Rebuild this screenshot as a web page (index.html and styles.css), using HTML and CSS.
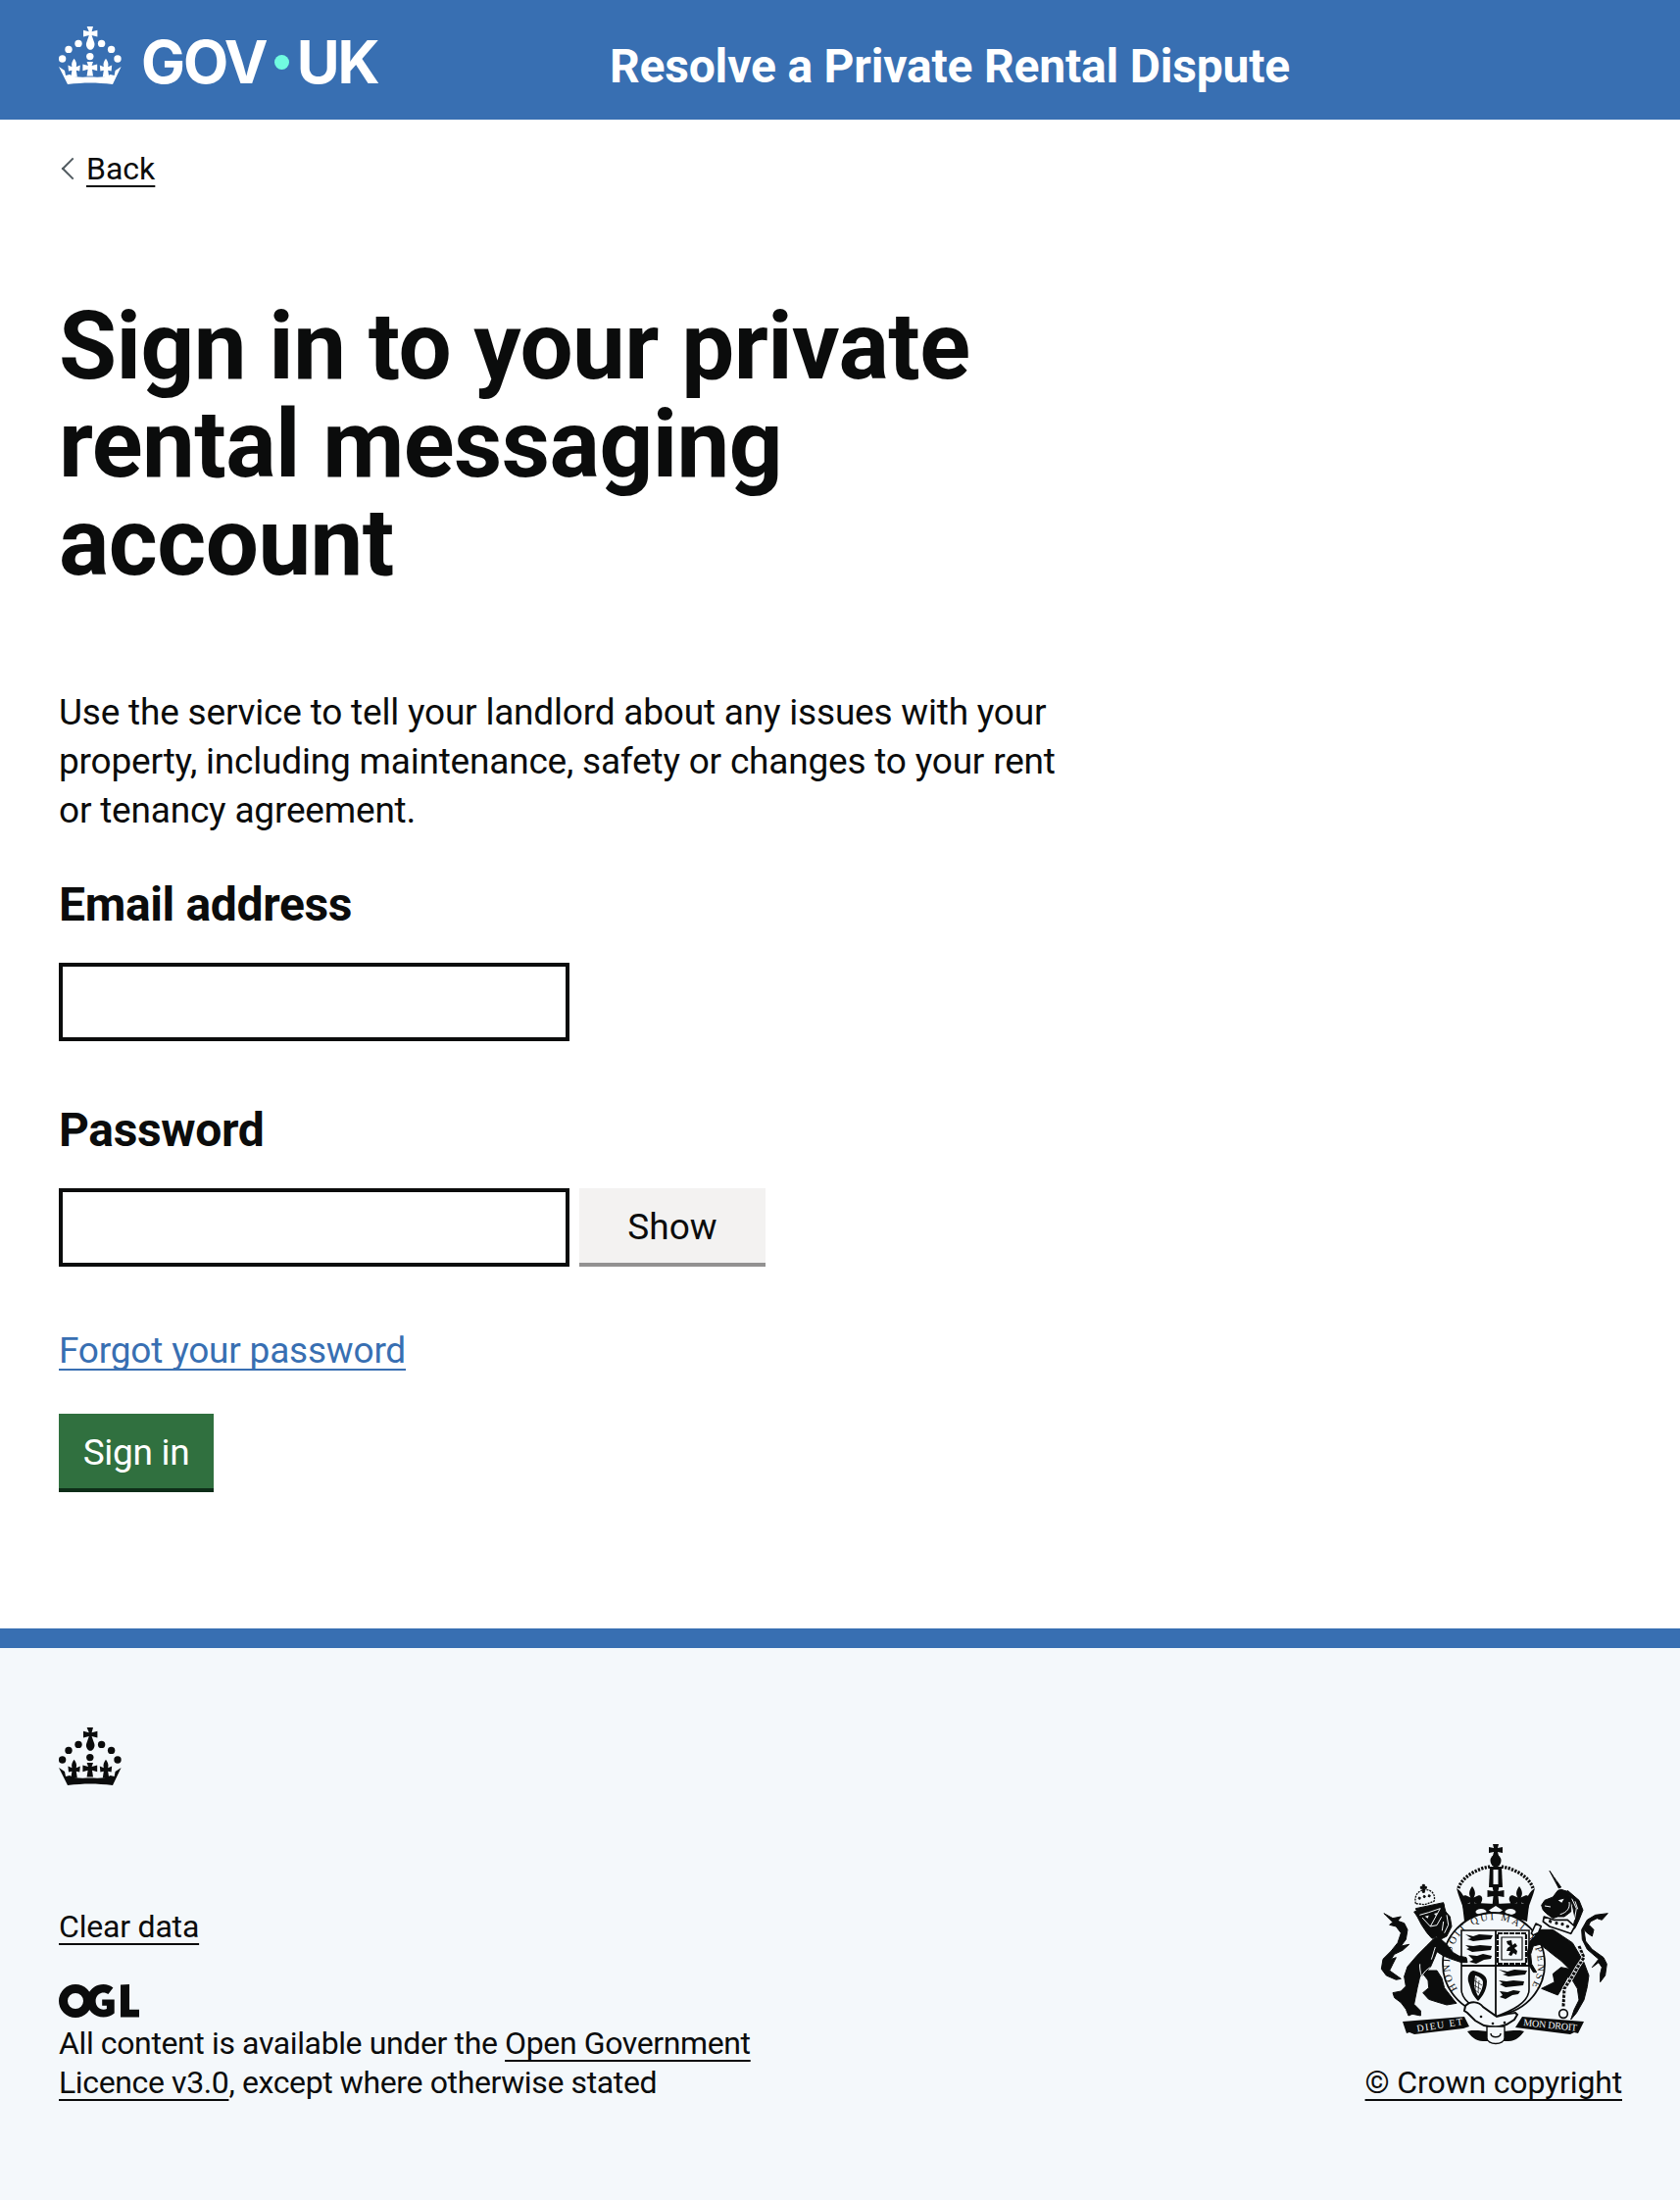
FILE: index.html
```html
<!DOCTYPE html>
<html lang="en">
<head>
<meta charset="utf-8">
<title>Sign in - Resolve a Private Rental Dispute</title>
<link rel="stylesheet" href="styles.css">
</head>
<body>
<svg class="defs" width="0" height="0" aria-hidden="true">
  <symbol id="crown" viewBox="0 0 32 30">
    <circle cx="1.8" cy="16.500" r="1.850"/><circle cx="5" cy="11.700" r="1.850"/><circle cx="10" cy="8.700" r="1.850"/><circle cx="15.900" cy="15.300" r="1.850"/><circle cx="21.800" cy="8.700" r="1.850"/><circle cx="26.800" cy="11.700" r="1.850"/><circle cx="30" cy="16.500" r="1.850"/>
    <path d="M14.300 0h3.200l-.7 2.600 2.900-.7v3.400l-2.900-.8 1.300 3.700c.6 1.700-.7 3.700-2 3.700s-2.600-2-2-3.700l1.300-3.700-2.900.8V1.900l2.900.7z"/>
    <path d="M14.300 18h3.200l-.7 2 2.800-.8v3.400l-2.600-.7.5 3.400h-3.200l.5-3.400-2.600.7v-3.400l2.800.8z"/>
    <path d="M7.800 16.400c1 1.500 1.500 2.500 1.100 4.200l2-.8-.3 3-1.700-.4.500 3.300H6.200l.5-3.300-1.700.4-.3-3 2 .8c-.4-1.700.1-2.700 1.100-4.200z"/>
    <path d="M24 16.400c-1 1.500-1.500 2.500-1.100 4.200l-2-.8.3 3 1.700-.4-.5 3.300h3.200l-.5-3.300 1.700.4.300-3-2 .8c.4-1.700-.1-2.700-1.100-4.200z"/>
    <path d="M0 20.500l3 2 .5 2.500 2-.5c2.500 1.700 6.500 1.300 10.400 1.300s7.900.4 10.400-1.300l2 .5.500-2.500 3-2-4.300 9c-8.500-1-14.500-1-23 0z"/>
  </symbol>
  <symbol id="fleur" viewBox="-12 -22 24 24" overflow="visible">
    <path d="M0-21c3 4 4 8 1.500 11.500l4.500-2c3-1 5 2 4 5l-2 5-6-3 1 5H-3l1-5-6 3-2-5c-1-3 1-6 4-5l4.500 2C-4-13-3-17 0-21z"/>
  </symbol>
</svg>

<header class="site-header">
  <a class="logo" href="#">
    <svg class="crown" aria-hidden="true"><use href="#crown"/></svg>
    <span class="logo-text">GOV<span class="logo-dot"></span>UK</span>
  </a>
  <a class="service-name" href="#">Resolve a Private Rental Dispute</a>
</header>

<div class="page">
  <a class="back-link" href="#">Back</a>
  <main class="main">
    <h1 class="title">Sign in to your private rental messaging account</h1>
    <p class="intro">Use the service to tell your landlord about any issues with your property, including maintenance, safety or changes to your rent or tenancy agreement.</p>
    <form class="form">
      <div class="field">
        <label class="label" for="email">Email address</label>
        <input class="input" id="email" type="email">
      </div>
      <div class="field">
        <label class="label" for="password">Password</label>
        <div class="password-row">
          <input class="input" id="password" type="password">
          <button class="btn btn-secondary" type="button">Show</button>
        </div>
      </div>
      <a class="forgot" href="#">Forgot your password</a>
      <button class="btn btn-primary" type="submit">Sign in</button>
    </form>
  </main>
</div>

<footer class="footer">
  <svg class="crown crown-footer" aria-hidden="true"><use href="#crown"/></svg>
  <div class="footer-row">
    <div class="footer-meta">
      <a class="footer-link clear" href="#">Clear data</a>
      <svg class="ogl" viewBox="0 0 82 34" aria-hidden="true">
        <path fill-rule="evenodd" d="M17 0a17 17 0 1 1 0 34 17 17 0 0 1 0-34zm0 9a8 8 0 1 0 0 16 8 8 0 0 0 0-16z"/>
        <path d="M45.500 0c3.900 0 7.300 1.300 9.900 3.500l-5 6.600c-1.400-1.100-3-1.700-4.800-1.700-4.700 0-8 3.800-8 8.600 0 4.900 3.300 8.700 8.100 8.700 1.300 0 2.300-.2 3.200-.7v-3.300h-4.700v-6.200h12.500v14c-3 2.700-7.200 4-11.100 4-9.500 0-17-7.200-17-16.500C28.600 7.200 36.100 0 45.500 0z"/>
        <path d="M63 .6L72 0v25.700h10V33.600H63z"/>
      </svg>
      <p class="licence">All content is available under the <a class="footer-link" href="#">Open Government Licence v3.0</a>, except where otherwise stated</p>
    </div>
    <div class="footer-crest">
      <svg class="arms" viewBox="0 0 250 215" aria-hidden="true">
        <g transform="translate(-40 -15)">
          <!-- royal crown -->
          <path d="M162 21h6l-1 4 5-1v6l-5-1 1 4h-6l1-4-5 1v-6l5 1z"/>
          <ellipse cx="165" cy="38" rx="5.500" ry="6.500"/>
          <path d="M127 66C131 54 146 46 159 44M203 66C199 54 184 46 171 44" fill="none" stroke="#0b0c0c" stroke-width="3.400" stroke-dasharray="2.200 1.300"/>
          <path d="M159 44h12l1 21h-14z"/><path d="M162.500 47h5v15h-5z" fill="#f4f8fb"/>
          <path d="M161.500 64h7l-1 5 6-1v7l-6-1 1 10h-7l1-10-6 1v-7l6 1z"/>
          <use href="#fleur" x="129" y="63" width="24" height="24"/>
          <use href="#fleur" x="177" y="63" width="24" height="24"/>
          <path d="M125 66c5 3 9 9 11 20l-4 1c-2-7-5-13-7-21zM205 66c-5 3-9 9-11 20l4 1c2-7 5-13 7-21z"/>
          <path d="M131 83c10-3 22-1 34-1s24-2 34 1l-2 17c-12-4-21-6-32-6s-20 2-32 6z"/>
          <ellipse cx="150" cy="90" rx="5.500" ry="3" fill="#f4f8fb"/><path d="M165 84l7 4.500-7 4.500-7-4.500z" fill="#f4f8fb"/><ellipse cx="180" cy="90" rx="5.500" ry="3" fill="#f4f8fb"/>
          <!-- garter and shield -->
          <circle cx="163" cy="143" r="52" fill="#f4f8fb" stroke="#0b0c0c" stroke-width="1.800"/>
          <path id="garter-arc" d="M126 168.800A45 45 0 1 1 200 168.800" fill="none"/>
          <text class="garter"><textPath href="#garter-arc" textLength="192" lengthAdjust="spacing">HONI SOIT QUI MAL Y PENSE</textPath></text>
          <path d="M130 109h69v60c0 14-18 22-34 28-16-6-35-14-35-28z" fill="#f4f8fb" stroke="#0b0c0c" stroke-width="1.600"/>
          <path d="M165 109v88M130 145h69" stroke="#0b0c0c" stroke-width="1.800"/>
          <path d="M134 113l8 2 6-2 14 1-2 4-10 1-8 1-6-2 4-1zM134 124l8 1 7-1 12 1-1 4-9 1-10 1-6-3 3-1zM137 134l9 1 6-2 9 2-1 3-7 1-8 4-7-2 4-2z"/>
          <path d="M167 112h29v31h-29z" fill="none" stroke="#0b0c0c" stroke-width="2.200" stroke-dasharray="5 1"/><path d="M171 116h21v23h-21z" fill="none" stroke="#0b0c0c" stroke-width="1.200"/>
          <path d="M176 120l5-1 1 5 3-2 2 3-3 2 3 3-1 4-3-2-2 3-3-1 2-4-4 0 1-3 3-2-3-2z"/>
          <path d="M142 150c-4 1-6 6-5 11l3 9c1 4 4 8 7 11 4-4 9-11 9-20 0-6-6-9-14-11z"/>
          <path d="M144 155c4 1 8 4 8 7 0 6-3 11-5 14-2-4-4-8-4-12z" fill="#f4f8fb"/>
          <path d="M145 157l-1 14M148 160l-1 12M143 160l8 5M143 165l7 4M144 170l4 3" stroke="#0b0c0c" stroke-width=".7"/>
          <path d="M168 149l9 2 7-2 13 1-2 4-9 1-8 1-6-2 4-1zM168 160l8 1 7-1 11 1-1 4-9 1-9 1-6-3 3-1zM169 171l8 1 6-2 7 1-2 3-6 1-7 4-6-2 3-2z"/>
          <!-- motto ribbons -->
          <path d="M70 202l63-5 5 10-6 2-50 6-5-2-3 1z"/>
          <text class="motto" transform="translate(85 212.500) rotate(-9)" textLength="47">DIEU ET</text>
          <path d="M255 202l-63-5-7 11 8 1 48 6 4-2 4 1z"/>
          <text class="motto" transform="translate(193 206) rotate(6)" textLength="55">MON DROIT</text>
          <path d="M134 186c6-6 14-4 18 1l14 10 12-3 7-1 2 2-3 5-8 5-11 3-12-2-9-5-8-8-3-2z" fill="#f4f8fb" stroke="#0b0c0c" stroke-width="2"/>
          <circle cx="150" cy="197" r="1.300"/><circle cx="162" cy="204" r="1.300"/><circle cx="174" cy="203" r="1.300"/>
          <path d="M136 212c3 4 8 10 16 10l6 0-1-10-10-1-7 0zM194 212c-3 4-8 10-16 10l-6 0 1-10 10-1 7 0z"/>
          <path d="M156 207h18v12c0 3-4 5.500-9 5.500s-9-2.500-9-5.500z" fill="#f4f8fb" stroke="#0b0c0c" stroke-width="1.400"/>
          <path d="M160 214c0 5 10 5 10 0" fill="none" stroke="#0b0c0c" stroke-width="1.400"/>
        </g>
        <!-- lion -->
        <g class="beast" transform="translate(0 25) scale(.3333)">
          <path d="M33 155L60 170l25-5-10 13 20 7 10 20-5 30-15 20 25-5-20 18-25 12-10 15 15-5-10 20-10 20 35 25-15 3-30-13-15-20 5-30 25-25 20-25 10-30-15-20-20-5 10-8z"/>
          <path d="M205 232l20 18 20 25 17 10 23 5 3 15h-18l-30-10-25-10-20-13-7 18-13 30-10 10h30l15 23 8 30 27 35 10 12-30 5-30-9-25-8-18-20 18-15-2-23-13-17-12 5-8 35-10 50 20 20v15l-25-5-12 5-8-20-15-20-20-15-5-15 25-5 15-15-5-30 10-30 30-35 30-30 25-25z"/>
          <path d="M125 150l40-10 50-15 7 25 13 15 5 30-15 30-20 10-10-10-15 7-15-17-17-25-13-25z"/>
          <path class="beast-line" d="M190 258c-5 15-8 28-12 38M148 348c-4-15-6-28-5-38M175 320c-10 5-20 15-27 28M142 160l28-8 35-12M150 168l25 27 30-55M175 195l20-4 14-25M225 160l5 30-12 25M215 180l-4 28"/>
          <path class="beast-dot" d="M158 164l12-3-3 9zM186 156l11-3-5 9z"/>
          <path class="lion-crown" d="M130 125c-5-22 5-40 28-42 22-2 34 16 28 35l-28 10z"/>
          <path d="M145 73h6v-6h6v6h6v6h-6v12h-6V79h-6zM140 105l5 2-2 5-5-2zM155 100l5 2-2 5-5-2zM170 98l5 2-2 5-5-2z"/>
          <path d="M130 140l85-18 2 9-84 16z"/>
        </g>
        <!-- unicorn -->
        <g class="beast" transform="translate(120 25) scale(.3333)">
          <path d="M180 25l35 50-7 3z"/>
          <path class="beast-line" d="M192 42l8-3M200 54l8-3"/>
          <path d="M155 130l10-15 25-10 15-20 10-3 20 6 10 27v35l-20 15h-20l-15 5-20-15-10-10z"/>
          <path class="beast-dot" d="M206 115l18-5-7 12z"/>
          <path class="beast-line" d="M240 120c3 18-6 32-28 38M165 132l18 3"/>
          <path d="M235 85l35 30 12 30-12 30-12 25-8 5 8-35-8-40z"/>
          <path class="beast-line" d="M248 110l14 30-6 35M258 118l8 24"/>
          <path class="collar" d="M163 165l30 10 42 0 22 20-12 22-35-12-30-10-20-15z"/>
          <path d="M180 175l6 3-2 6-6-3zM198 182h6v6h-6zM216 185h6v6h-6zM232 192h6v6h-6z"/>
          <path d="M150 205h40l30 20 30 20 15 25 20 35 15 40-5 35-10 40-23 40-17 20 10-30 15-30-5-35-15-25-15-10-15 30-15 25-25-10-25-10 40-20-5-25 25-20 25 5-25-25-20-15-25-20-20-15-20 5-8 25 3 30 15 25h-10l-15-25-3-35 8-35 15-15z"/>
          <path class="collar" d="M138 186l16 8-8 20-16 8-6-6z"/>
          <path class="chain-gap" d="M270 255l15 35-20 30-20 35-20 30-3 55"/>
          <path class="chain" d="M270 255l15 35-20 30-20 35-20 30-3 55"/>
          <path class="chain-link" d="M270 262l12 28-17 27-18 34-20 31-2 50"/>
          <circle class="chain-ring" cx="222" cy="462" r="13"/>
          <path d="M358 155l-18 20-15-5-20 10-5 10 15 15-5 20-15-10-10-10 5 35 20 25 35 25 10 20-5 35-15 20v-25l5-20-10-15-20 15 20-25-35-30-15-30-2-30 17-30 25-15z"/>
        </g>
      </svg>
      <a class="footer-link crown-link" href="#">© Crown copyright</a>
    </div>
  </div>
</footer>
</body>
</html>
```
FILE: styles.css
```css
* { box-sizing: border-box; }
html, body { margin: 0; padding: 0; }
body {
  font-family: Roboto, "Noto Sans", Arial, sans-serif;
  color: #0b0c0c;
  background: #fff;
  min-height: 2244px;
  display: flex;
  flex-direction: column;
}
.defs { position: absolute; }

.site-header {
  height: 122px;
  background: #386fb2;
  display: flex;
  align-items: center;
  padding: 0 60px;
  color: #fff;
}
.logo {
  width: 562px;
  display: flex;
  align-items: center;
  gap: 20px;
  color: #fff;
  text-decoration: none;
  margin-top: -8px;
  fill: #fff;
}
.crown { width: 64px; height: 60px; display: block; }
.logo-text {
  font-family: Inter, sans-serif;
  font-weight: 700;
  font-size: 60px;
  line-height: 60px;
  letter-spacing: -2px;
  display: flex;
  align-items: center;
  margin-top: 12px;
}
.logo-dot {
  width: 15px;
  height: 15px;
  border-radius: 50%;
  background: #70fbe0;
  margin: 0 8px;
}
.service-name {
  font-size: 48px;
  font-weight: 700;
  color: #fff;
  text-decoration: none;
  line-height: 50px;
  letter-spacing: -.2px;
  margin-top: 14px;
}

.page { padding: 0 60px; flex: 1; }
.back-link {
  display: inline-block;
  margin-top: 30px;
  padding-left: 28px;
  position: relative;
  font-size: 32px;
  line-height: 40px;
  color: #0b0c0c;
  text-decoration: underline;
  text-decoration-thickness: 2px;
  text-decoration-skip-ink: none;
  text-underline-offset: 6px;
}
.back-link::before {
  content: "";
  position: absolute;
  left: 6px;
  top: 12px;
  width: 14px;
  height: 14px;
  border-left: 2px solid #505a5f;
  border-bottom: 2px solid #505a5f;
  transform: rotate(45deg);
}
.main { width: 1060px; }
.title {
  margin: 111px 0 0;
  width: 1000px;
  font-size: 96px;
  line-height: 100px;
  font-weight: 700;
  letter-spacing: -.55px;
}
.intro {
  margin: 99px 0 0;
  font-size: 37px;
  line-height: 50px;
  letter-spacing: -.2px;
  width: 1040px;
}
.form { display: flex; flex-direction: column; align-items: flex-start; }
.field { margin-top: 41px; }
.field + .field { margin-top: 61px; }
.label {
  display: block;
  font-size: 48px;
  font-weight: 700;
  line-height: 60px;
  letter-spacing: -.35px;
  margin-bottom: 29px;
}
.input {
  display: block;
  width: 521px;
  height: 80px;
  border: 4px solid #0b0c0c;
  background: #fff;
  padding: 10px;
  font: inherit;
  border-radius: 0;
}
.password-row { display: flex; gap: 10px; }
.btn {
  border: 0;
  font-family: inherit;
  font-size: 37px;
  line-height: 50px;
  height: 80px;
  cursor: pointer;
  border-radius: 0;
}
.btn-secondary {
  width: 190px;
  background: #f3f2f1;
  color: #0b0c0c;
  box-shadow: inset 0 -4px 0 #929191;
}
.forgot {
  margin-top: 61px;
  font-size: 37px;
  line-height: 50px;
  letter-spacing: -.2px;
  color: #386fb2;
  text-decoration: underline;
  text-decoration-thickness: 2px;
  text-decoration-skip-ink: none;
  text-underline-offset: 6px;
}
.btn-primary {
  margin-top: 39px;
  width: 158px;
  background: #30703f;
  color: #fff;
  letter-spacing: -.3px;
  box-shadow: inset 0 -4px 0 #0e2d18;
}

.footer {
  height: 583px;
  background: #f4f8fb;
  border-top: 20px solid #386fb2;
  padding: 81px 59px 0 60px;
  fill: #0b0c0c;
  display: flex;
  flex-direction: column;
}
.crown-footer { flex: none; }
.footer-row {
  margin-top: 62px;
  display: flex;
  justify-content: space-between;
  align-items: flex-end;
  height: 260px;
  font-size: 32px;
  line-height: 40px;
}
.footer-meta { display: flex; flex-direction: column; align-items: flex-start; width: 760px; }
.footer-link {
  color: #0b0c0c;
  text-decoration: underline;
  text-decoration-thickness: 2px;
  text-decoration-skip-ink: none;
  text-underline-offset: 6px;
}
.clear { margin-bottom: 39px; letter-spacing: -.2px; }
.ogl { width: 82px; height: 34px; display: block; }
.licence { margin: 6px 0 0; letter-spacing: -.38px; }
.footer-crest { display: flex; flex-direction: column; align-items: center; }
.arms { width: 250px; height: 215px; display: block; margin: 0 0 14px 5px; fill: #0b0c0c; overflow: visible; }
.crown-link { letter-spacing: -.15px; }
.garter { font-family: "Liberation Serif", serif; font-size: 10.5px; fill: #0b0c0c; }
.motto { font-family: "Liberation Serif", serif; font-size: 10px; fill: #f4f8fb; }
.beast path, .beast circle { stroke-linejoin: round; }
.beast > path:not([class]) { stroke: #0b0c0c; stroke-width: 3px; }
.beast-line { fill: none; stroke: #f4f8fb; stroke-width: 3px; }
.beast-dot { fill: #f4f8fb; }
.lion-crown { fill: #f4f8fb; stroke: #0b0c0c; stroke-width: 4px; stroke-dasharray: 6 3; }
.collar { fill: #f4f8fb; stroke: #0b0c0c; stroke-width: 5px; }
.chain-gap { fill: none; stroke: #f4f8fb; stroke-width: 13px; }
.chain { fill: none; stroke: #0b0c0c; stroke-width: 9px; stroke-dasharray: 10 3; }
.chain-link { fill: none; stroke: #f4f8fb; stroke-width: 2.500px; stroke-dasharray: 6 7; }
.chain-ring { fill: none; stroke: #0b0c0c; stroke-width: 5px; }
```
